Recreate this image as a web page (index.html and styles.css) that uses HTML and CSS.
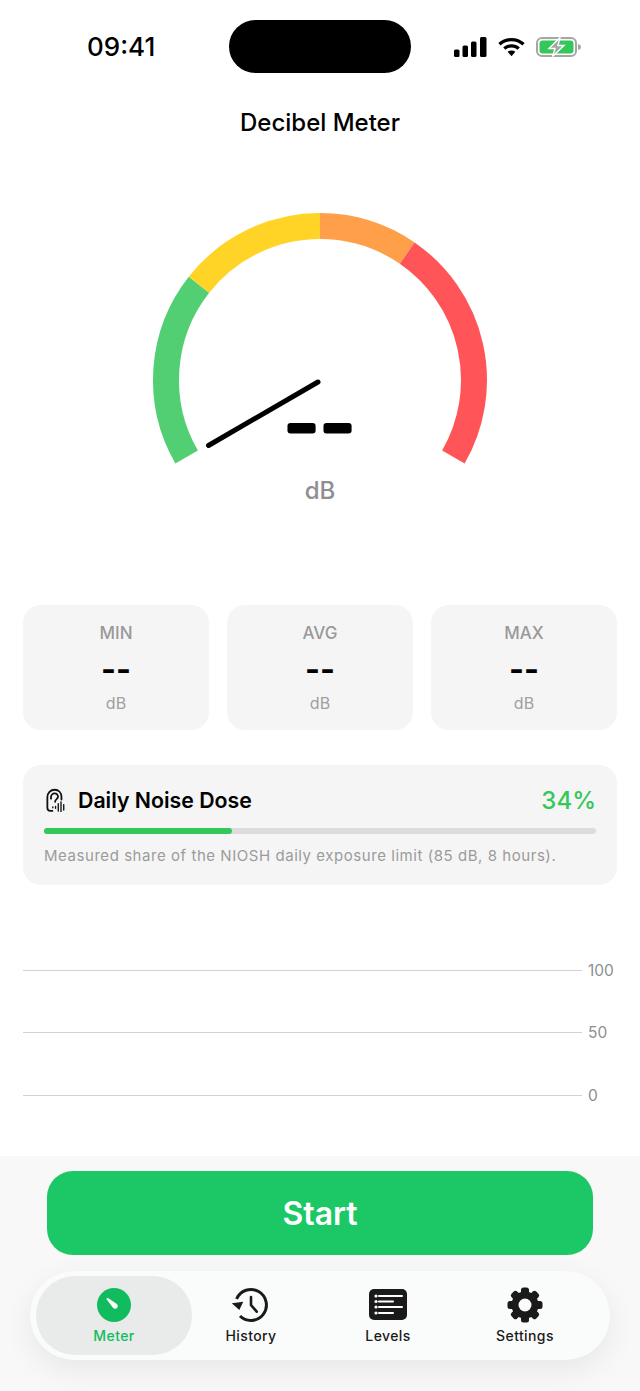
FILE: index.html
```html
<!DOCTYPE html>
<html lang="en">
<head>
  <meta charset="UTF-8" />
  <title>Decibel Meter</title>
  <meta name="viewport" content="width=device-width, initial-scale=1" />
  <link rel="stylesheet" href="styles.css">
</head>
<body>
  <div class="status-bar">
    <span class="time">09:41</span>
    <div class="island"></div>
    <div class="status-icons">
      <svg width="33" height="20" viewBox="0 0 33 20">
        <rect x="0" y="12.5" width="5.5" height="7.5" rx="1.5" />
        <rect x="8.5" y="8.5" width="5.5" height="11.5" rx="1.5" />
        <rect x="17" y="4.5" width="5.5" height="15.5" rx="1.5" />
        <rect x="26" y="0" width="6.5" height="20" rx="1.5" />
      </svg>
      <svg width="27" height="20" viewBox="0 0 28 20">
        <path d="M1.5 7.2 C8.5 0.6 19.5 0.6 26.5 7.2" fill="none" stroke="#000" stroke-width="3.4" />
        <path d="M6.5 11.6 C10.8 7.8 17.2 7.8 21.5 11.6" fill="none" stroke="#000" stroke-width="3.4" />
        <path d="M10 15 C12.5 13 15.5 13 18 15 L14 19.6 Z" />
      </svg>
      <svg width="46" height="22" viewBox="0 0 46 22">
        <rect x="1" y="2" width="39" height="18" rx="5" fill="none" stroke="#a6a6a6" stroke-width="2" />
        <rect x="3.5" y="4.5" width="34" height="13" rx="3" fill="#34c759" />
        <path d="M42 8 C44 8.5 45 9.5 45 11 C45 12.5 44 13.5 42 14 Z" fill="#a6a6a6" />
        <path d="M24 1.5 L13 12.5 H19 L16.5 20.5 L28 9.5 H22 Z" fill="#a6a6a6" stroke="#fff" stroke-width="1.4" />
      </svg>
    </div>
  </div>

  <h1 class="page-title">Decibel Meter</h1>

  <div class="gauge">
    <svg class="gauge-svg" width="360" height="275" viewBox="140 200 360 275">
      <g fill="none" stroke-width="26">
        <path d="M186.63 457 A154 154 0 0 1 198.97 284.77" stroke="#53cf73" />
        <path d="M198.97 284.77 A154 154 0 0 1 320 226" stroke="#ffd426" />
        <path d="M320 226 A154 154 0 0 1 407.2 253.1" stroke="#ff9f4a" />
        <path d="M407.2 253.1 A154 154 0 0 1 453.37 457" stroke="#ff5558" />
      </g>
      <line x1="318" y1="382" x2="208.5" y2="445.5" stroke="#000" stroke-width="5" stroke-linecap="round" />
      <text class="gauge-value" x="321" y="451" text-anchor="middle">--</text>
    </svg>
    <div class="gauge-unit">dB</div>
  </div>

  <div class="stats">
    <div class="stat-card">
      <div class="stat-label">MIN</div>
      <div class="stat-value">--</div>
      <div class="stat-unit">dB</div>
    </div>
    <div class="stat-card">
      <div class="stat-label">AVG</div>
      <div class="stat-value">--</div>
      <div class="stat-unit">dB</div>
    </div>
    <div class="stat-card">
      <div class="stat-label">MAX</div>
      <div class="stat-value">--</div>
      <div class="stat-unit">dB</div>
    </div>
  </div>

  <div class="dose-card">
    <div class="dose-head">
      <svg class="dose-icon" width="20" height="25" viewBox="0 0 22 26" fill="none" stroke="#111" stroke-width="2" stroke-linecap="round">
        <path d="M7 24.5 H5 C2.6 24.5 1.5 23 1.5 21 V9.5 C1.5 4.5 5 1.2 9.5 1.2 C14 1.2 17 4.5 17 9 V12" />
        <path d="M5.5 11 V9.5 C5.5 7 7.3 5.2 9.5 5.2 C11.7 5.2 13.2 7 13.2 9 C13.2 11.5 10 11.6 10 14.5" />
        <path d="M10.5 19.5 V21.5 M13.5 16.5 V24.5 M16.5 14.5 V25 M19.5 17.5 V23.5 M7.5 20 V21" stroke-width="1.5" />
      </svg>
      <span class="dose-title">Daily Noise Dose</span>
      <span class="dose-percent">34%</span>
    </div>
    <div class="dose-bar"><div class="dose-fill" style="width: 34%"></div></div>
    <p class="dose-note">Measured share of the NIOSH daily exposure limit (85 dB, 8 hours).</p>
  </div>

  <div class="chart">
    <div class="chart-row"><div class="chart-line"></div><span class="chart-label">100</span></div>
    <div class="chart-row"><div class="chart-line"></div><span class="chart-label">50</span></div>
    <div class="chart-row"><div class="chart-line"></div><span class="chart-label">0</span></div>
  </div>

  <div class="bottom-panel">
    <button class="start-button">Start</button>
    <nav class="tab-bar">
      <div class="tab active">
        <svg width="36" height="36" viewBox="0 0 36 36">
          <circle cx="18" cy="18" r="17" fill="#10bc5e" />
          <path d="M10.4 12 Q10.6 10.6 12 11 L20.5 16.8 C22 18 22.2 19.8 21 21 C19.8 22.2 18 22 16.8 20.5 Z" fill="#fff" />
        </svg>
        <span class="tab-label">Meter</span>
      </div>
      <div class="tab">
        <svg width="38" height="36" viewBox="0 0 38 36" fill="none" stroke="#1a1a1a" stroke-width="3">
          <path d="M4.6 12 A15.5 15.5 0 1 1 8 29" />
          <path d="M-0.3 16.3 L11.3 14.7 L7.3 23 Z" fill="#1a1a1a" stroke="none" />
          <path d="M19 10 V18 L24.7 24.7" stroke-linecap="round" stroke-width="2.6" />
        </svg>
        <span class="tab-label">History</span>
      </div>
      <div class="tab">
        <svg width="38" height="36" viewBox="0 0 38 36">
          <rect x="0" y="2" width="38" height="31" rx="5" fill="#1a1a1a" />
          <g stroke="#fff" stroke-width="2" stroke-linecap="round">
            <path d="M10 9 H33 M10 14.5 H24 M10 20 H33 M10 26 H24" />
          </g>
          <g fill="#fff">
            <circle cx="7" cy="9" r="1.6" />
            <circle cx="7" cy="14.5" r="1.6" />
            <circle cx="7" cy="20" r="1.6" />
            <circle cx="7" cy="26" r="1.6" />
          </g>
        </svg>
        <span class="tab-label">Levels</span>
      </div>
      <div class="tab">
        <svg width="36" height="36" viewBox="0 0 36 36">
          <g fill="#1a1a1a">
            <circle cx="18" cy="18" r="13.5" />
            <rect x="14" y="0.5" width="8" height="35" rx="2.5" />
            <rect x="14" y="0.5" width="8" height="35" rx="2.5" transform="rotate(45 18 18)" />
            <rect x="14" y="0.5" width="8" height="35" rx="2.5" transform="rotate(90 18 18)" />
            <rect x="14" y="0.5" width="8" height="35" rx="2.5" transform="rotate(135 18 18)" />
          </g>
          <circle cx="18" cy="18" r="6.5" fill="#fafbfb" />
        </svg>
        <span class="tab-label">Settings</span>
      </div>
    </nav>
  </div>
</body>
</html>
```

FILE: styles.css
```css
* {
  box-sizing: border-box;
}
body {
  margin: 0;
  min-height: 100vh;
  display: flex;
  flex-direction: column;
  background-color: #fff;
  color: #000;
  font-family: Inter, "Liberation Sans", sans-serif;
}

.status-bar {
  height: 94px;
  padding: 20px 58px 0 87px;
  display: flex;
  align-items: flex-start;
}
.time {
  width: 142px;
  line-height: 53px;
  font-size: 26px;
  font-weight: 500;
}
.island {
  width: 182px;
  height: 53px;
  border-radius: 27px;
  background-color: #000;
}
.status-icons {
  margin-left: 43px;
  height: 53px;
  display: flex;
  align-items: center;
  gap: 11px;
}

.page-title {
  margin: 0;
  height: 58px;
  line-height: 58px;
  text-align: center;
  font-size: 24px;
  font-weight: 500;
}

.gauge {
  margin-top: 48px;
  display: flex;
  flex-direction: column;
  align-items: center;
}
.gauge-svg {
  display: block;
}
.gauge-value {
  font-family: Inter, sans-serif;
  font-size: 73px;
  font-weight: 300;
  letter-spacing: 3px;
  fill: #000;
  stroke: #000;
  stroke-width: 6px;
  stroke-linejoin: round;
}
.gauge-unit {
  height: 31px;
  line-height: 31px;
  font-size: 24px;
  font-weight: 500;
  color: #8e8e93;
}

.stats {
  margin-top: 99px;
  padding: 0 23px;
  display: grid;
  grid-template-columns: repeat(3, 1fr);
  gap: 18px;
}
.stat-card {
  height: 125px;
  padding-top: 17px;
  border-radius: 18px;
  background-color: #f5f5f5;
  text-align: center;
}
.stat-label {
  line-height: 22px;
  font-size: 17px;
  font-weight: 500;
  color: #999;
}
.stat-value {
  margin-top: 4px;
  line-height: 44px;
  font-size: 32px;
  font-weight: 700;
}
.stat-unit {
  line-height: 22px;
  font-size: 16px;
  color: #a0a0a0;
}

.dose-card {
  margin: 35px 23px 0;
  height: 120px;
  padding: 20px 21px 0;
  border-radius: 18px;
  background-color: #f5f5f5;
}
.dose-head {
  height: 30px;
  display: flex;
  align-items: center;
}
.dose-icon {
  margin: 0 12px 0 2px;
}
.dose-title {
  font-size: 21.3px;
  font-weight: 600;
}
.dose-percent {
  margin-left: auto;
  font-size: 24px;
  font-weight: 500;
  color: #34c759;
}
.dose-bar {
  margin-top: 13px;
  height: 6px;
  border-radius: 3px;
  background-color: #dcdcdc;
}
.dose-fill {
  height: 100%;
  border-radius: 3px;
  background-color: #34c759;
}
.dose-note {
  margin: 12px 0 0;
  line-height: 20px;
  font-size: 15px;
  letter-spacing: 0.55px;
  color: #9b9b9b;
  white-space: nowrap;
}

.chart {
  padding: 54px 23px 0;
}
.chart-row {
  height: 62.5px;
  display: flex;
  align-items: center;
  gap: 6px;
}
.chart-line {
  flex: 1;
  height: 1px;
  background-color: #d2d2d6;
}
.chart-label {
  width: 29px;
  font-size: 15.5px;
  color: #8e8e8e;
}

.bottom-panel {
  margin-top: auto;
  height: 235px;
  padding: 15px 30px 0;
  background-color: #f8f8f8;
}
.start-button {
  display: block;
  width: 546px;
  height: 84px;
  margin: 0 auto;
  border: none;
  border-radius: 26px;
  background-color: #1cc866;
  color: #fff;
  font-family: inherit;
  font-size: 32px;
  font-weight: 600;
}
.tab-bar {
  margin-top: 16px;
  height: 89px;
  padding: 5px 6px;
  display: flex;
  border-radius: 45px;
  background-color: #fafbfb;
  box-shadow: 0 10px 30px rgba(0, 0, 0, 0.07);
}
.tab {
  width: 137px;
  padding-top: 11px;
  display: flex;
  flex-direction: column;
  align-items: center;
  gap: 3px;
  color: #1a1a1a;
}
.tab.active {
  width: 156px;
  margin-right: -9.5px;
  border-radius: 39px;
  background-color: #e9eaea;
  color: #10bc5e;
}
.tab-label {
  line-height: 20px;
  font-size: 14px;
  font-weight: 500;
  letter-spacing: 0.4px;
}
```
